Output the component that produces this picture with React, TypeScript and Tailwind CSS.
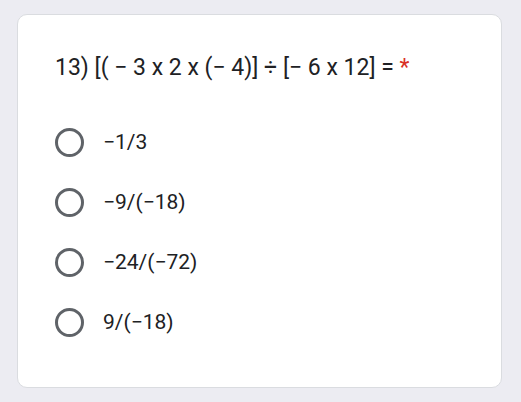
export default function App() {
  const options = ['−1/3', '−9/(−18)', '−24/(−72)', '9/(−18)'];

  return (
    <div className="h-[402px] w-[521px] bg-[#ececf2] pl-[17px] pt-[14px]" style={{ fontFamily: 'Roboto, sans-serif' }}>
      <div className="h-[374px] w-[485px] rounded-[10px] border border-[#dadce0] bg-white pl-[37px] pt-[37px]">
        <div className="text-[23px] leading-[32px] text-[#202124]">
          13) [( − 3 x 2 x (− 4)] ÷ [− 6 x 12] = <span className="text-[#d93025]">*</span>
        </div>
        <div className="mt-[28px] flex flex-col">
          {options.map((opt) => (
            <div key={opt} className="flex h-[60px] items-center">
              <div className="h-[29px] w-[29px] shrink-0 rounded-full border-[3px] border-[#5f6368]" />
              <span className="ml-[19px] text-[21px] leading-[28px] text-[#202124]">{opt}</span>
            </div>
          ))}
        </div>
      </div>
    </div>
  );
}
